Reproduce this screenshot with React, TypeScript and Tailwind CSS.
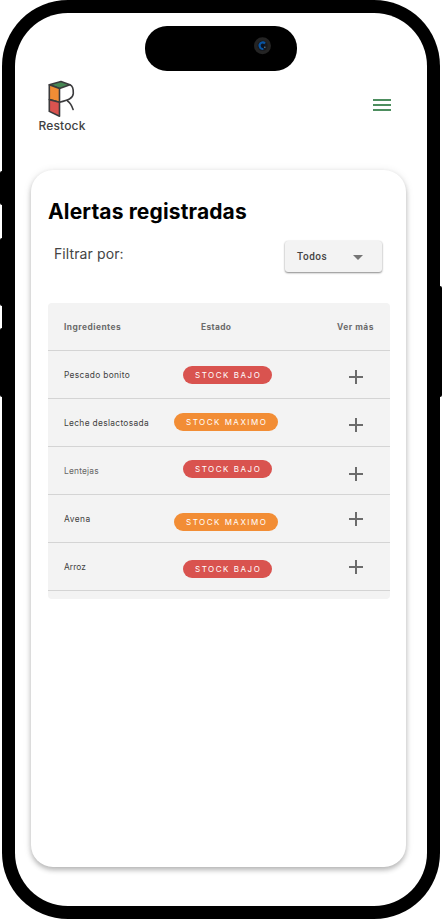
type Level = "low" | "max";

interface Alert {
  name: string;
  level: Level;
  nameClass: string;
  badgeClass: string;
  plusClass: string;
}

const alerts: Alert[] = [
  { name: "Pescado bonito", level: "low", nameClass: "text-[#3f3f3f] tracking-[0.32px]", badgeClass: "mt-[15px]", plusClass: "mt-[19px]" },
  { name: "Leche deslactosada", level: "max", nameClass: "text-[#3f3f3f] tracking-[0.32px]", badgeClass: "mt-[14px]", plusClass: "mt-[19px]" },
  { name: "Lentejas", level: "low", nameClass: "text-[#666666] tracking-[0.2px]", badgeClass: "mt-[13px]", plusClass: "mt-[20px]" },
  { name: "Avena", level: "max", nameClass: "text-[#3f3f3f] tracking-[0.45px]", badgeClass: "mt-[18px]", plusClass: "mt-[17px]" },
  { name: "Arroz", level: "low", nameClass: "text-[#3f3f3f] tracking-[0.05px]", badgeClass: "mt-[17px]", plusClass: "mt-[17px]" },
];

function Logo() {
  return (
    <div className="flex w-[48px] flex-col items-center">
      <svg width="30" height="38" viewBox="0 0 30 38" fill="none" stroke="#3b3b3d" strokeWidth="1.6" strokeLinejoin="round" strokeLinecap="round">
        <path d="M2.3 4.8 14 1.6 23 4.8 12.5 8.4Z" fill="#468653" />
        <path d="M2.3 4.8 12.5 8.4V22.2L2.3 19.6Z" fill="#f28d35" />
        <path d="M2.3 19.6 12.5 22.2V36.3L2.3 31.4Z" fill="#d9534f" />
        <path d="M23 4.8C26 6 26.5 9 26.3 13.5C26 18.5 21 20.2 12.5 22.2M20.4 20.8C23 22.6 25 26 26.1 29.5" />
      </svg>
      <span className="-mt-[1px] text-[12px] leading-[17px] font-medium tracking-[0.18px] whitespace-nowrap text-[#3f3f42]">Restock</span>
    </div>
  );
}

function Badge({ level, className }: { level: Level; className: string }) {
  const low = level === "low";
  return (
    <span
      className={`flex h-[18px] items-center rounded-full pl-3 text-[8px] whitespace-nowrap text-white ${
        low ? "ml-[9px] w-[89px] bg-[#d9534f] tracking-[1.52px]" : "w-[104px] bg-[#f28d35] tracking-[1.5px]"
      } ${className}`}
    >
      {low ? "STOCK BAJO" : "STOCK MAXIMO"}
    </span>
  );
}

function Plus({ className }: { className: string }) {
  return (
    <svg className={`ml-[19px] ${className}`} width="14" height="14" viewBox="0 0 14 14" fill="#6b6b6b">
      <path d="M6 0h2v6h6v2H8v6H6V8H0V6h6z" />
    </svg>
  );
}

export default function App() {
  return (
    <div className="relative flex h-[919px] w-[442px] justify-center overflow-hidden bg-white font-['Inter','Liberation_Sans',sans-serif]">
      <i className="absolute top-[171px] left-0 h-[34px] w-[4px] rounded-l-[2px] bg-black" />
      <i className="absolute top-[238px] left-0 h-[68px] w-[4px] rounded-l-[2px] bg-black" />
      <i className="absolute top-[328px] left-0 h-[69px] w-[4px] rounded-l-[2px] bg-black" />
      <i className="absolute top-[286px] right-0 h-[111px] w-[4px] rounded-r-[2px] bg-black" />

      <div className="relative h-[919px] w-[438px] rounded-[66px] bg-black px-[13px] pt-[12.5px] pb-[13px]">
        <div className="flex h-full flex-col rounded-[53px] bg-white">
          <div className="absolute top-[26px] left-[143px] h-[45px] w-[152px] rounded-[22px] bg-black">
            <svg className="absolute top-[11px] left-[109px]" width="18" height="18" viewBox="0 0 18 18">
              <circle cx="8.5" cy="8.7" r="8.5" fill="#242424" />
              <circle cx="8.5" cy="8.7" r="5.2" fill="#191a1e" />
              <path d="M11 6.4A3.2 3.2 0 1 0 9.3 11.8" fill="none" stroke="#0755a6" strokeWidth="2.2" />
              <circle cx="9" cy="9" r="1.9" fill="#071326" />
              <circle cx="10.8" cy="10.3" r="0.8" fill="#5d8293" />
            </svg>
          </div>

          <header className="flex items-start justify-between pt-[67px] pr-[36px] pl-[23px]">
            <Logo />
            <div className="mt-[19px] flex w-[18px] flex-col gap-[3px]">
              <i className="h-[2px] bg-[#4d8e5f]" />
              <i className="h-[2px] bg-[#4d8e5f]" />
              <i className="h-[2px] bg-[#4d8e5f]" />
            </div>
          </header>

          <main className="mt-[36.5px] ml-[16px] flex h-[697px] w-[375px] flex-col rounded-[22px] bg-white px-[17px] shadow-[0_3px_5px_rgba(0,0,0,0.24),0_1px_8px_rgba(0,0,0,0.1)]">
            <h1 className="mt-[27px] text-[21px] leading-[30px] font-bold tracking-[0.14px] whitespace-nowrap text-black">Alertas registradas</h1>
            <div className="mt-[14px] flex h-[32px] items-start justify-between pr-[7px] pl-[6px]">
              <span className="text-[14px] leading-[26px] tracking-[0.1px] whitespace-nowrap text-[#444444]">Filtrar por:</span>
              <button className="flex h-[31px] w-[97px] items-center rounded-[3px] bg-[#f3f3f3] pl-3 shadow-[0_1px_2px_rgba(0,0,0,0.45),0_0_2px_rgba(0,0,0,0.08)]">
                <span className="w-[56px] text-left font-['Roboto'] text-[10px] font-medium tracking-[0.55px] text-[#444444]">Todos</span>
                <svg className="mt-px" width="10" height="5" viewBox="0 0 10 5" fill="#757575"><path d="M0 0h10L5 5z" /></svg>
              </button>
            </div>

            <section className="mt-[30px] h-[296px] w-[342px] overflow-hidden rounded-[4px] bg-[#f3f3f3]">
              <div className="grid h-[48px] grid-cols-[110px_156px_60px] items-center border-b border-[#d4d4d4] pt-[2px] pl-4 text-[8.4px] font-bold text-[#6b6b6b]">
                <span className="tracking-[0.48px]">Ingredientes</span>
                <span className="pl-[27px] tracking-[0.36px]">Estado</span>
                <span className="pl-[7px] tracking-[0.52px]">Ver más</span>
              </div>
              {alerts.map((a) => (
                <div key={a.name} className="grid h-[48px] grid-cols-[110px_156px_60px] items-start border-b border-[#d4d4d4] pl-4">
                  <span className={`text-[8.4px] leading-[48px] whitespace-nowrap ${a.nameClass}`}>{a.name}</span>
                  <Badge level={a.level} className={a.badgeClass} />
                  <Plus className={a.plusClass} />
                </div>
              ))}
            </section>
          </main>
        </div>
      </div>
    </div>
  );
}
